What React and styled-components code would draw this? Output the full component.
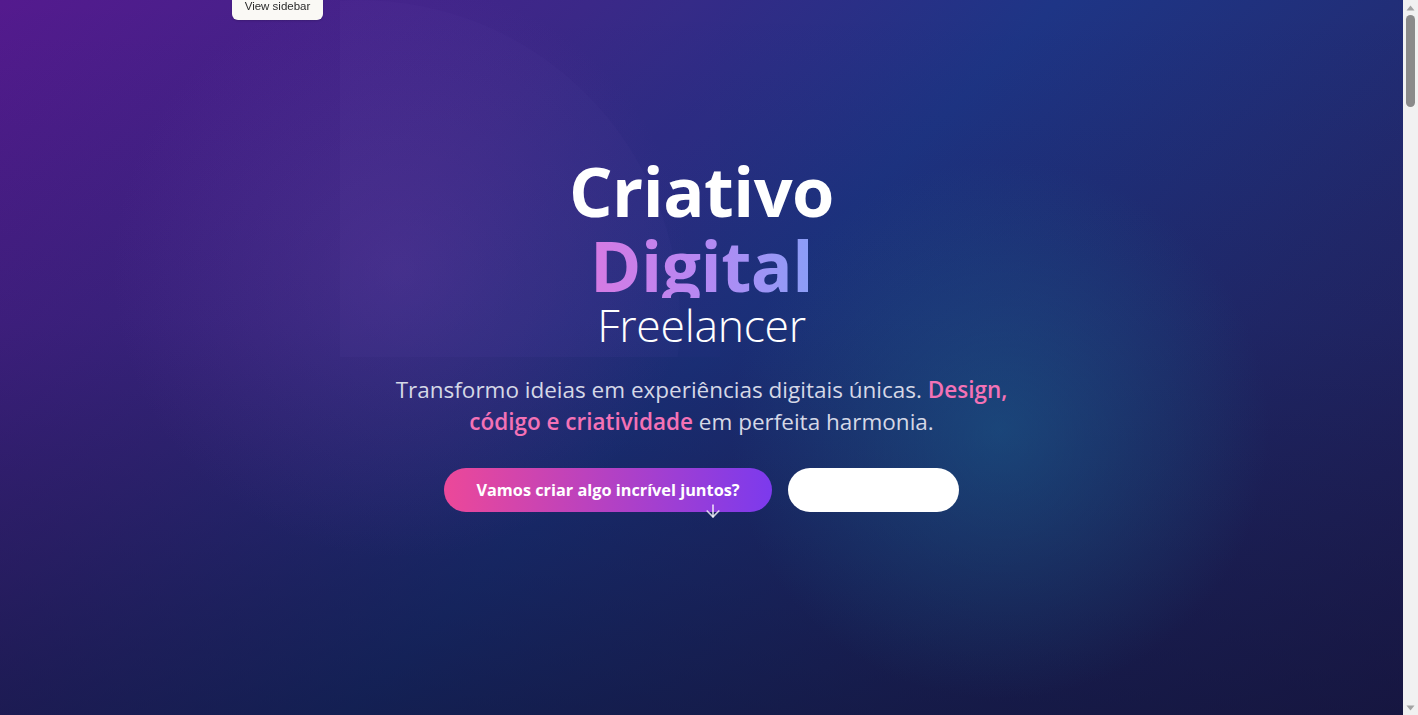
import React from "react";
import styled, { createGlobalStyle } from "styled-components";
import { ArrowDown } from "lucide-react";

const Global = createGlobalStyle`
  * { box-sizing: border-box; }
  html, body { margin: 0; padding: 0; }
  body {
    font-family: "Open Sans", "Noto Sans", sans-serif;
    background: #141a3d;
    color: #fff;
  }
`;

const Page = styled.div`
  position: relative;
  min-height: 5300px;
  margin-right: 15px;
  background: #141a3d;
`;

const Hero = styled.section`
  position: relative;
  height: 715px;
  overflow: hidden;
  display: flex;
  flex-direction: column;
  align-items: center;
  justify-content: center;
  padding-bottom: 50px;
  background:
    linear-gradient(to bottom, rgba(10, 14, 40, 0) 0%, rgba(10, 14, 40, 0.15) 45%, rgba(10, 14, 40, 0.55) 100%),
    linear-gradient(135deg, #541a8e 0%, #3a2787 28%, #1e3586 50%, #232a70 75%, #25205e 100%);
`;

const Glow = styled.div`
  position: absolute;
  pointer-events: none;
  border-radius: 50%;
  left: ${(p) => p.$x}px;
  top: ${(p) => p.$y}px;
  width: ${(p) => p.$size}px;
  height: ${(p) => p.$size}px;
  background: radial-gradient(circle, ${(p) => p.$color} 0%, transparent 68%);
`;

const BlobBox = styled.div`
  position: absolute;
  left: 340px;
  top: -20px;
  width: 380px;
  height: 377px;
  overflow: hidden;
  pointer-events: none;
  background: rgba(120, 80, 200, 0.025);
`;

const BlobCircle = styled.div`
  position: absolute;
  left: -300px;
  top: 20px;
  width: 640px;
  height: 640px;
  border-radius: 50%;
  background: rgba(140, 110, 210, 0.04);
`;

const Content = styled.div`
  position: relative;
  z-index: 1;
  display: flex;
  flex-direction: column;
  align-items: center;
  text-align: center;
`;

const Title = styled.h1`
  margin: 0 0 22px;
  display: flex;
  flex-direction: column;
  align-items: center;
  font-weight: 700;
`;

const Line = styled.span`
  display: block;
  font-size: 68.5px;
  line-height: 73px;
  letter-spacing: -0.5px;
  color: #fff;
`;

const GradientLine = styled.span`
  display: block;
  font-size: 69.5px;
  line-height: 66px;
  height: 66px;
  margin-top: 5px;
  letter-spacing: -0.5px;
  background: linear-gradient(to right, #d67ae3 0%, #b688f3 50%, #8a9ef7 100%);
  -webkit-background-clip: text;
  background-clip: text;
  color: transparent;
`;

const Sub = styled.span`
  display: block;
  font-size: 44.5px;
  line-height: 54px;
  font-weight: 300;
  letter-spacing: -0.3px;
  color: #fff;
`;

const Lead = styled.p`
  margin: 0 0 30px;
  max-width: 650px;
  font-size: 22.5px;
  line-height: 32px;
  color: #d5d8e6;
`;

const Accent = styled.span`
  color: #f472b6;
  font-weight: 600;
`;

const Actions = styled.div`
  display: flex;
  gap: 16px;
`;

const Button = styled.button`
  height: 44px;
  padding: 0 32px;
  border: none;
  border-radius: 999px;
  font-family: "Open Sans", "Noto Sans", sans-serif;
  font-size: 16.3px;
  font-weight: 700;
  color: #fff;
  cursor: pointer;
  background: ${(p) =>
    p.$primary ? "linear-gradient(to right, #ec4899, #7c3aed)" : "#ffffff"};
  min-width: ${(p) => (p.$primary ? "auto" : "171px")};
`;

const ScrollHint = styled.div`
  position: absolute;
  left: 703px;
  top: 501px;
  color: rgba(255, 255, 255, 0.78);
  display: flex;
  z-index: 2;
`;

const Tooltip = styled.div`
  position: fixed;
  top: 0;
  left: 232px;
  width: 91px;
  height: 20px;
  background: #faf9f5;
  border-radius: 0 0 6px 6px;
  color: #2b2b2b;
  font-family: "Liberation Sans", Arial, sans-serif;
  font-size: 11.5px;
  line-height: 12px;
  display: flex;
  justify-content: center;
  z-index: 10;
  box-shadow: 0 1px 2px rgba(0, 0, 0, 0.15);
`;

const Scrollbar = styled.div`
  position: fixed;
  top: 0;
  right: 0;
  width: 15px;
  height: 100vh;
  background: #f1f1f1;
  z-index: 20;
  display: flex;
  flex-direction: column;
  align-items: center;
`;

const ScrollArrow = styled.div`
  width: 15px;
  height: 15px;
  display: flex;
  align-items: center;
  justify-content: center;
  color: #a3a3a3;
  margin-top: ${(p) => (p.$down ? "auto" : "0")};
`;

const ScrollThumb = styled.div`
  width: 9px;
  height: 92px;
  border-radius: 5px;
  background: #8a8a8a;
`;

const Section = styled.section`
  min-height: 1150px;
  padding: 96px 48px;
  background: ${(p) => (p.$alt ? "#161b42" : "#131838")};
  color: #e5e7f0;
  font-family: "Open Sans", sans-serif;
`;

const SectionTitle = styled.h2`
  margin: 0 0 16px;
  text-align: center;
  font-size: 40px;
`;

function Tri({ down }) {
  return (
    <svg width="9" height="6" viewBox="0 0 9 6">
      <path d={down ? "M0.5 0.5 L8.5 0.5 L4.5 5.5 Z" : "M0.5 5.5 L8.5 5.5 L4.5 0.5 Z"} fill="currentColor" />
    </svg>
  );
}

export default function App() {
  return (
    <Page>
      <Global />
      <Tooltip>View sidebar</Tooltip>
      <Scrollbar>
        <ScrollArrow>
          <Tri />
        </ScrollArrow>
        <ScrollThumb />
        <ScrollArrow $down>
          <Tri down />
        </ScrollArrow>
      </Scrollbar>
      <Hero>
        <Glow $x={100} $y={-30} $size={600} $color="rgba(120, 70, 180, 0.25)" />
        <BlobBox>
          <BlobCircle />
        </BlobBox>
        <Glow $x={720} $y={150} $size={560} $color="rgba(25, 95, 140, 0.55)" />
        <Content>
          <Title>
            <Line>Criativo</Line>
            <GradientLine>Digital</GradientLine>
            <Sub>Freelancer</Sub>
          </Title>
          <Lead>
            Transformo ideias em experiências digitais únicas.{" "}
            <Accent>Design, código e criatividade</Accent> em perfeita harmonia.
          </Lead>
          <Actions>
            <Button $primary>Vamos criar algo incrível juntos?</Button>
            <Button>Ver Portfólio</Button>
          </Actions>
        </Content>
        <ScrollHint>
          <ArrowDown size={20} strokeWidth={2} />
        </ScrollHint>
      </Hero>
      <Section $alt>
        <SectionTitle>Sobre</SectionTitle>
      </Section>
      <Section>
        <SectionTitle>Serviços</SectionTitle>
      </Section>
      <Section $alt>
        <SectionTitle>Portfólio</SectionTitle>
      </Section>
      <Section>
        <SectionTitle>Contato</SectionTitle>
      </Section>
    </Page>
  );
}
